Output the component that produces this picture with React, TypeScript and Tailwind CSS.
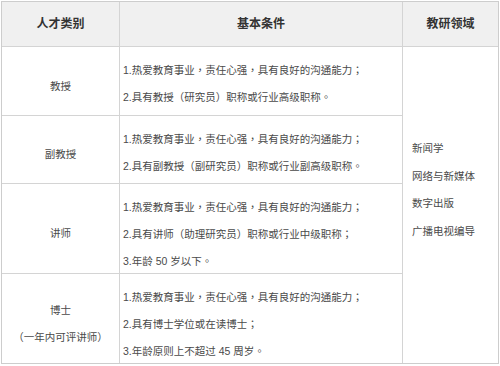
const font = '"Liberation Sans", "Noto Sans CJK TC", "Noto Sans CJK SC", sans-serif';

const rows = [
  { title: ['教授'], h: 'h-[69px] border-b', lines: ['1.热爱教育事业，责任心强，具有良好的沟通能力；', '2.具有教授（研究员）职称或行业高级职称。'] },
  { title: ['副教授'], h: 'h-[68px] border-b', lines: ['1.热爱教育事业，责任心强，具有良好的沟通能力；', '2.具有副教授（副研究员）职称或行业副高级职称。'] },
  { title: ['讲师'], h: 'h-[90px] border-b', lines: ['1.热爱教育事业，责任心强，具有良好的沟通能力；', '2.具有讲师（助理研究员）职称或行业中级职称；', '3.年龄 50 岁以下。'] },
  { title: ['博士', '（一年内可评讲师）'], h: 'h-[89px]', lines: ['1.热爱教育事业，责任心强，具有良好的沟通能力；', '2.具有博士学位或在读博士；', '3.年龄原则上不超过 45 周岁。'] },
];

const fields = ['新闻学', '网络与新媒体', '数字出版', '广播电视编导'];

export default function App() {
  return (
    <div className="w-[500px] h-[366px] bg-white overflow-hidden" style={{ fontFamily: font }}>
      <div className="ml-[1px] mt-[1px] w-[498px] border border-[#cdcdcd] grid grid-cols-[118px_283px_95px] grid-rows-[45px_69px_68px_90px_89px]">
        {/* header */}
        <div className="bg-[#f0f0f0] border-b border-r border-[#d4d4d4] flex items-center justify-center text-[12px] font-bold text-[#333]">人才类别</div>
        <div className="bg-[#f0f0f0] border-b border-r border-[#d4d4d4] flex items-center justify-center text-[12px] font-bold text-[#333]">基本条件</div>
        <div className="bg-[#f0f0f0] border-b border-[#d4d4d4] flex items-center justify-center text-[12px] font-bold text-[#333]">教研领域</div>

        {rows.map((r, i) => (
          <div key={'t' + i} className={`${r.h} border-r border-[#d4d4d4] flex flex-col justify-center items-center pt-[10px] text-[10.5px] leading-[27px] text-[#4a4a4a]`} style={{ gridColumn: 1, gridRow: i + 2 }}>
            {r.title.map(t => <div key={t}>{t}</div>)}
          </div>
        ))}
        {rows.map((r, i) => (
          <div key={'c' + i} className={`${r.h} border-r border-[#d4d4d4] pt-[10px] pl-[3px] text-[10.5px] leading-[27px] text-[#4a4a4a] whitespace-nowrap overflow-hidden`} style={{ gridColumn: 2, gridRow: i + 2 }}>
            {r.lines.map(l => <div key={l}>{l}</div>)}
          </div>
        ))}

        {/* research fields */}
        <div className="pt-[88px] pl-[9px] text-[10.5px] leading-[27.5px] text-[#4a4a4a]" style={{ gridColumn: 3, gridRow: '2 / 6' }}>
          {fields.map(f => <div key={f}>{f}</div>)}
        </div>
      </div>
    </div>
  );
}
